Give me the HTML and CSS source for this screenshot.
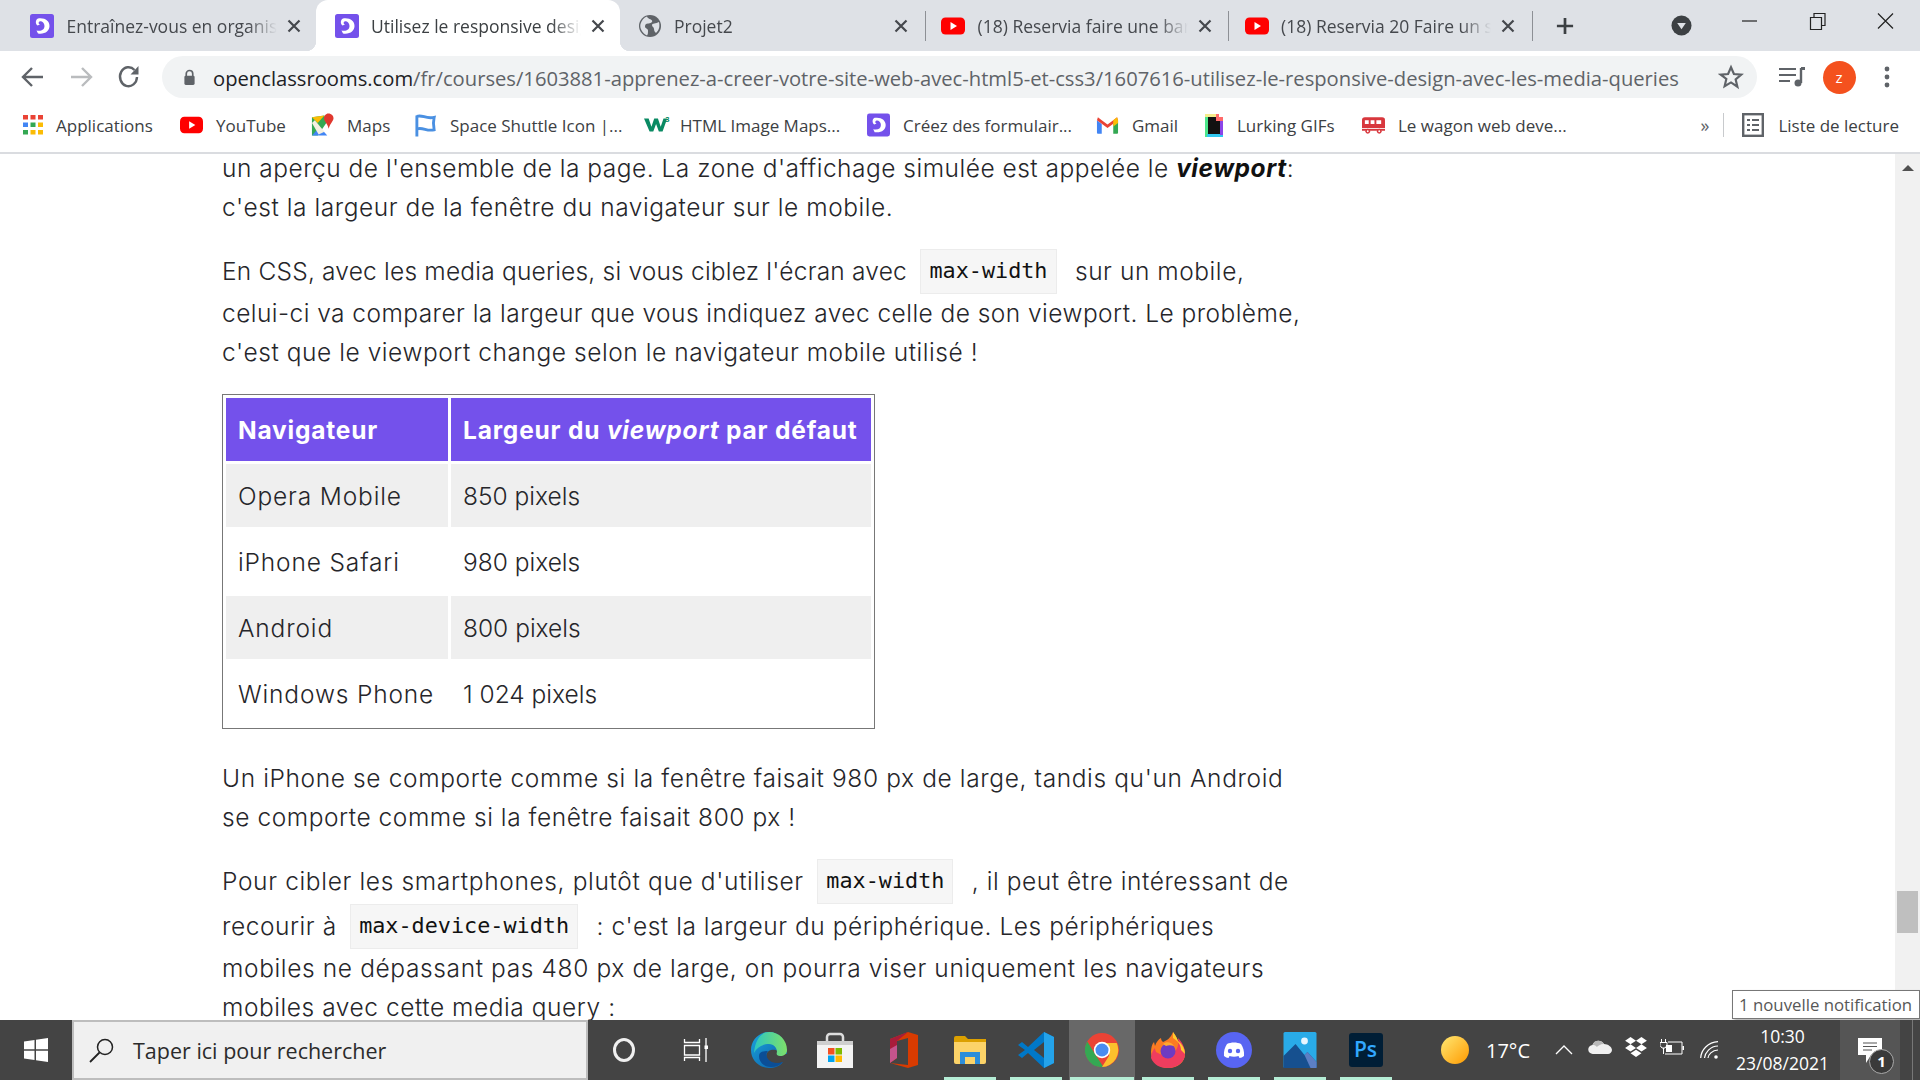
FILE: index.html
```html
<!DOCTYPE html>
<html lang="fr">
<head>
<meta charset="utf-8">
<title>Utilisez le responsive design</title>
<link rel="stylesheet" href="styles.css">
</head>
<body>
<svg class="defs" width="0" height="0">
  <symbol id="oc" viewBox="0 0 24 24"><rect width="24" height="24" rx="2.5" fill="#7451eb"/><path d="M8 4.500C15 3.500 19.500 7 19.500 12S15 20.500 8 19.500L6.500 16.500C11 17.500 14.500 16 14.500 12S11 6.500 9.500 7.500C8 8.500 8.500 10 10 10.500L7.500 11.500C5 9.500 5.500 5.500 8 4.500Z" fill="#fff"/></symbol>
  <symbol id="yt" viewBox="0 0 24 24"><rect y="3.500" width="24" height="17" rx="4.500" fill="#f00"/><path d="M9.500 8v8l6.500-4z" fill="#fff"/></symbol>
  <symbol id="x" viewBox="0 0 14 14"><path d="M1.500 1.500l11 11M12.500 1.500l-11 11" stroke="#45484d" stroke-width="2.200" fill="none"/></symbol>
</svg>

<header class="tabstrip">
  <div class="tab"><svg class="fav"><use href="#oc"/></svg><span class="tab-title">Entraînez-vous en organisant</span><svg class="tab-x"><use href="#x"/></svg></div>
  <div class="tab tab-active"><svg class="fav"><use href="#oc"/></svg><span class="tab-title">Utilisez le responsive design</span><svg class="tab-x"><use href="#x"/></svg></div>
  <div class="tab tab-sep"><svg class="fav" viewBox="0 0 24 24"><circle cx="12" cy="12" r="11" fill="#5f6368"/><path d="M9 2.500c1 3 4 2 5 4s-2 3-4 3-3 1-3 3 3 2 3 4 0 4-1 5C4 19 1.500 14 2.500 10 3.500 6.500 6 3.500 9 2.500ZM21 8c1 5 0 8-3 11-1-1-2-2-2-4s-2-2-2-4 4-1 7-3Z" fill="#dee1e6"/></svg><span class="tab-title">Projet2</span><svg class="tab-x"><use href="#x"/></svg></div>
  <div class="tab tab-sep"><svg class="fav"><use href="#yt"/></svg><span class="tab-title">(18) Reservia faire une banière</span><svg class="tab-x"><use href="#x"/></svg></div>
  <div class="tab tab-sep"><svg class="fav"><use href="#yt"/></svg><span class="tab-title">(18) Reservia 20 Faire un site</span><svg class="tab-x"><use href="#x"/></svg></div>
  <svg class="newtab" viewBox="0 0 20 20"><path d="M10 1v18M1 10h18" stroke="#3c4043" stroke-width="3"/></svg>
  <svg class="tabsearch" viewBox="0 0 22 22"><circle cx="11" cy="11" r="10.500" fill="#3c4043"/><path d="M6.500 8.500h9L11 15z" fill="#dee1e6"/></svg>
  <div class="winbtns">
    <svg class="winbtn" viewBox="0 0 68 42"><path d="M27 21h15" stroke="#222" stroke-width="1.200"/></svg>
    <svg class="winbtn" viewBox="0 0 68 42"><path d="M27.500 17.500h11v12h-11zM31 17v-3.500h11v12h-3.500" stroke="#222" stroke-width="1.200" fill="none"/></svg>
    <svg class="winbtn" viewBox="0 0 68 42"><path d="M27 13.500l15 15M42 13.500l-15 15" stroke="#222" stroke-width="1.200"/></svg>
  </div>
</header>

<nav class="toolbar">
  <svg class="tool" viewBox="0 0 48 42"><path d="M34 21H15M23 12l-9 9 9 9" stroke="#5f6368" stroke-width="2.400" fill="none"/></svg>
  <svg class="tool" viewBox="0 0 48 42"><path d="M14 21h19M25 12l9 9-9 9" stroke="#babcbe" stroke-width="2.400" fill="none"/></svg>
  <svg class="tool" viewBox="0 0 48 42"><path d="M32 21a8.500 9.500 0 1 1-2.500-7" stroke="#5f6368" stroke-width="2.400" fill="none"/><path d="M33.500 10v8.500h-8z" fill="#5f6368"/></svg>
  <div class="omnibox">
    <svg class="lock" viewBox="0 0 14 18"><path d="M3.500 8V5a3.500 3.500 0 0 1 7 0v3" stroke="#5f6368" stroke-width="1.800" fill="none"/><rect x="1.500" y="7" width="11" height="10" rx="1.500" fill="#5f6368"/></svg>
    <span class="url"><span class="host">openclassrooms.com</span>/fr/courses/1603881-apprenez-a-creer-votre-site-web-avec-html5-et-css3/1607616-utilisez-le-responsive-design-avec-les-media-queries</span>
    <svg class="star" viewBox="0 0 24 24"><path d="M12 3l2.700 6.200 6.800.6-5.200 4.500 1.600 6.700L12 17l-5.900 3.500 1.600-6.700L2.500 9.800l6.800-.6z" stroke="#5f6368" stroke-width="2" fill="none"/></svg>
  </div>
  <svg class="tool" viewBox="0 0 48 42"><path d="M12 13h17M12 19h17M12 25h11" stroke="#5f6368" stroke-width="2.200"/><path d="M34 12v15" stroke="#5f6368" stroke-width="2.400"/><path d="M34 11h4v3h-4z" fill="#5f6368"/><circle cx="31" cy="27" r="3.500" fill="#5f6368"/></svg>
  <div class="avatar-wrap"><div class="avatar">z</div></div>
  <svg class="tool" viewBox="0 0 48 42"><circle cx="24" cy="13" r="2.400" fill="#5f6368"/><circle cx="24" cy="21" r="2.400" fill="#5f6368"/><circle cx="24" cy="29" r="2.400" fill="#5f6368"/></svg>
</nav>

<nav class="bookmarks">
  <div class="bm"><svg class="bm-ic" viewBox="0 0 20 20"><g fill="#ea4335"><rect width="5" height="4.500"/><rect x="7.500" width="5" height="4.500"/><rect x="15" width="5" height="4.500"/></g><rect y="7.500" width="5" height="4.500" fill="#4285f4"/><rect x="7.500" y="7.500" width="5" height="4.500" fill="#34a853"/><rect x="15" y="7.500" width="5" height="4.500" fill="#fbbc05"/><g fill="#34a853"><rect y="15" width="5" height="4.500"/></g><rect x="7.500" y="15" width="5" height="4.500" fill="#fbbc05"/><rect x="15" y="15" width="5" height="4.500" fill="#fbbc05"/></svg><span>Applications</span></div>
  <div class="bm"><svg class="bm-ic bm-wide"><use href="#yt"/></svg><span>YouTube</span></div>
  <div class="bm"><svg class="bm-ic bm-wide" viewBox="0 0 24 24"><path d="M1 4l13-2 2 8-9 13H1z" fill="#34a853"/><path d="M1 4l6 6 7-8z" fill="#fbbc05"/><path d="M1 23l8-9 8 9z" fill="#4285f4"/><path d="M1 10l3-3 10 12-6 3z" fill="#f4f0e0"/><path d="M18 0c3.500 0 5.500 2.500 5.500 5 0 3-3.500 5-5 11-1.500-6-5-8-5-11 0-2.500 2-5 4.500-5z" fill="#e0382e"/></svg><span>Maps</span></div>
  <div class="bm"><svg class="bm-ic bm-wide" viewBox="0 0 24 24"><path d="M3 24V2M3 3c6-2 9 3 18 1-1 4-1 8 0 13-8 2-11-3-18-1" stroke="#4a90e2" stroke-width="3" fill="none"/></svg><span>Space Shuttle Icon |...</span></div>
  <div class="bm"><svg class="bm-ic bm-w3" viewBox="0 0 28 20"><path d="M0 3h5l3 9 3-9h4l3 9 3-9h4l-5 14h-4l-3-8-3 8H6z" fill="#0a8a63"/><text x="23" y="7" class="w3-sup">3</text></svg><span>HTML Image Maps...</span></div>
  <div class="bm"><svg class="bm-ic bm-wide"><use href="#oc"/></svg><span>Créez des formulair...</span></div>
  <div class="bm"><svg class="bm-ic bm-wide" viewBox="0 0 24 20"><path d="M1 5v13a1 1 0 0 0 1 1h4V9z" fill="#4285f4"/><path d="M23 5v13a1 1 0 0 1-1 1h-4V9z" fill="#34a853"/><path d="M1 5l11 8 11-8-1-3-4 3-6 4.500L6 5 2 2z" fill="#ea4335"/><path d="M18 5l4-3 1 3v3l-5 3.500z" fill="#fbbc05"/></svg><span>Gmail</span></div>
  <div class="bm"><svg class="bm-ic bm-lurk" viewBox="0 0 20 24"><rect x="1" y="1" width="11" height="3" fill="#f5ec8c"/><rect x="1" y="4" width="3" height="20" fill="#4ce68a"/><rect x="3" y="21" width="16" height="3" fill="#30c8f0"/><rect x="4" y="4" width="12" height="17" fill="#111"/><rect x="16" y="8" width="3" height="14" fill="#8b45e8"/><path d="M12 1h3v3h4v4h-7z" fill="#ff6a6a"/></svg><span>Lurking GIFs</span></div>
  <div class="bm"><svg class="bm-ic bm-wide" viewBox="0 0 24 18"><path d="M3 1h18a3 3 0 0 1 3 3v8H0V4a3 3 0 0 1 3-3z" fill="#d8373d"/><path d="M0 13h24v2H0z" fill="#d8373d"/><path d="M3 4h4v4H3zM9 4h4v4H9zM15 4h5v4h-5z" fill="#fff"/><circle cx="6" cy="15.500" r="2.500" fill="#d8373d"/><circle cx="18" cy="15.500" r="2.500" fill="#d8373d"/><circle cx="6" cy="15.500" r="1" fill="#fff"/><circle cx="18" cy="15.500" r="1" fill="#fff"/></svg><span>Le wagon web deve...</span></div>
  <div class="bm-end"><span class="chev">»</span><i class="bm-sep"></i><svg class="bm-ic bm-list" viewBox="0 0 22 24"><rect x="1.200" y="1.200" width="19.600" height="21.600" fill="none" stroke="#5f6368" stroke-width="2.400"/><path d="M5 7h3M10 7h7M5 12h3M10 12h7M5 17h3M10 17h7" stroke="#5f6368" stroke-width="2"/></svg><span>Liste de lecture</span></div>
</nav>

<main class="page">
  <article class="article">
    <p><span class="near">un aperçu de l'ensemble de la page. La zone d'affichage simulée est appelée le</span> <strong><em>viewport</em></strong>:<br>c'est la largeur de la fenêtre du navigateur sur le mobile.</p>
    <p><span class="tight">En CSS, avec les media queries, si vous ciblez l'écran avec</span> <code>max-width</code> sur un mobile,<br><span class="snug">celui-ci va comparer la largeur que vous indiquez avec celle de son viewport. Le problème,</span><br>c'est que le viewport change selon le navigateur mobile utilisé !</p>
    <table class="table">
      <thead><tr><th>Navigateur</th><th>Largeur du <em>viewport</em> par défaut</th></tr></thead>
      <tbody>
        <tr><td>Opera Mobile</td><td>850 pixels</td></tr>
        <tr><td>iPhone Safari</td><td>980 pixels</td></tr>
        <tr><td>Android</td><td>800 pixels</td></tr>
        <tr><td>Windows Phone</td><td>1 024 pixels</td></tr>
      </tbody>
    </table>
    <p><span class="wide">Un iPhone se comporte comme si la fenêtre faisait 980 px de large, tandis qu'un Android</span><br>se comporte comme si la fenêtre faisait 800 px !</p>
    <p><span class="loose">Pour cibler les smartphones, plutôt que d'utiliser</span> <code>max-width</code> , il peut être intéressant de<br>recourir à <code>max-device-width</code> : c'est la largeur du périphérique. Les périphériques<br><span class="wide">mobiles ne dépassant pas 480 px de large, on pourra viser uniquement les navigateurs</span><br>mobiles avec cette media query :</p>
  </article>
  <aside class="scrollbar"><i class="sb-arrow"></i><i class="sb-thumb"></i></aside>
  <div class="tooltip">1 nouvelle notification</div>
</main>

<footer class="taskbar">
  <div class="start"><svg class="winlogo" viewBox="0 0 24 24"><path d="M0 3.500l10.500-1.600V11.300H0zM12 1.700L24 0v11.300H12zM0 12.700h10.500v9.400L0 20.500zM12 12.700h12V24l-12-1.700z" fill="#fff"/></svg></div>
  <div class="search"><svg class="lens" viewBox="0 0 25 25"><circle cx="16" cy="9" r="7.500" stroke="#222" stroke-width="1.500" fill="none"/><path d="M10.500 14.500L1 24" stroke="#222" stroke-width="1.800"/></svg><span>Taper ici pour rechercher</span></div>
  <div class="cortana"><i class="ring"></i></div>
  <div class="taskview"><svg viewBox="0 0 25 24" class="tv"><path d="M1.500 7.500h15V17h-15zM1.500 1v3.500h15V1M1.500 23v-3.500h15V23M23 0v24" stroke="#fff" stroke-width="1.300" fill="none"/><rect x="21.500" y="7.500" width="3.500" height="3.500" fill="#fff"/></svg></div>
  <div class="apps">
    <div class="app"><svg class="app-ic" viewBox="0 0 36 36"><defs><linearGradient id="eg" x1="0" y1="0" x2="1" y2="1"><stop offset="0" stop-color="#1ba4dc"/><stop offset="1" stop-color="#0a5ca8"/></linearGradient><linearGradient id="eg2" x1="0" y1="0" x2="1" y2="0"><stop offset="0" stop-color="#2cc7c0"/><stop offset="1" stop-color="#7ee06a"/></linearGradient></defs><path d="M18 0C8 0 0 8 0 18c0 10 8 18 18 18 6 0 11-2 14-6-6 3-13 2-16-3-2-4 0-8 4-9 6-1 9 2 10 4h6C36 8 28 0 18 0Z" fill="url(#eg)"/><path d="M18 0c10 0 18 8 18 18 0 4-3 6-7 6-3 0-4-2-3-4 0-4-3-8-8-8-6 0-12 3-15 9C4 8 10 0 18 0Z" fill="url(#eg2)"/><path d="M8 24c0 7 6 11 12 11 5 0 9-2 12-5-6 2-12 1-15-3-2-3-2-6 0-8-5 0-9 1-9 5Z" fill="#0b4e96"/></svg></div>
    <div class="app"><svg class="app-ic" viewBox="0 0 36 36"><path d="M10 10V5a3 3 0 0 1 3-3h10a3 3 0 0 1 3 3v5" stroke="#ddd" stroke-width="2.500" fill="none"/><path d="M0 9h36v27H0z" fill="#f4f4f4"/><path d="M0 9h36v4H0z" fill="#cfcfcf"/><path d="M11 16h6.500v6.500H11z" fill="#f25022"/><path d="M18.500 16H25v6.500h-6.500z" fill="#7fba00"/><path d="M11 23.500h6.500V30H11z" fill="#00a4ef"/><path d="M18.500 23.500H25V30h-6.500z" fill="#ffb900"/></svg></div>
    <div class="app app-shift"><svg class="app-ic app-off" viewBox="0 0 28 36"><path d="M18 0l10 3v30l-10 3-18-5 18 2V6L7 9v17l-7 5V7z" fill="#d83b01"/><path d="M18 0L7 9v8L0 31V7z" fill="#a81c3a"/><path d="M0 17l7-4v13l-7 5z" fill="#c4548c"/></svg></div>
    <div class="app app-on"><svg class="app-ic app-folder" viewBox="0 0 32 32"><path d="M0 4a2 2 0 0 1 2-2h9l3 3h18v5H0z" fill="#dca000"/><path d="M0 8h32v20a2 2 0 0 1-2 2H2a2 2 0 0 1-2-2z" fill="#fcd368"/><path d="M6 30V18h20v12h-5v-7H11v7z" fill="#2d8ed9"/></svg></div>
    <div class="app app-on"><svg class="app-ic" viewBox="0 0 36 36"><path d="M26 0l10 5v26l-10 5-16-15-6 5-4-3 7-5-7-5 4-3 6 5z" fill="#0078c8"/><path d="M26 0l10 5v26l-10 5z" fill="#24a3ea"/><path d="M26 10v16l-10-8z" fill="#444"/></svg></div>
    <div class="app app-on app-active"><svg class="app-ic app-chrome" viewBox="0 0 24 24"><circle cx="12" cy="12" r="12" fill="#ea4335"/><path d="M1.600 6 7.500 15.500 13 24A12 12 0 0 1 1.600 6Z" fill="#34a853"/><path d="M12 7h10.400A12 12 0 0 1 12 24l5-8-.5-7z" fill="#fbc02d"/><circle cx="12" cy="12" r="5.800" fill="#fff"/><circle cx="12" cy="12" r="4.600" fill="#4a8cf0"/></svg></div>
    <div class="app app-on"><svg class="app-ic" viewBox="0 0 34 36"><path d="M17 36C7 36 0 29 0 20c0-4 1-8 3-10l1 4c1-4 4-7 6-8 0 2 1 3 2 4 3-1 8-4 10-10 3 4 4 6 5 9 3 2 7 6 7 13 0 8-7 14-17 14Z" fill="#fb7b22"/><path d="M17 36c10 0 17-7 17-14 0-7-3-12-7-16 1 6 0 12-6 16-4 2-10 2-14-1-2 0-3-3-3-5-2 2-4 6-4 10 3 7 9 10 17 10Z" fill="#ef3d5e"/><path d="M22 0c3 4 4 6 5 9 3 2 7 7 7 13l-4-4c0-5-3-9-8-12z" fill="#ffcb2e"/><circle cx="17" cy="19" r="7.500" fill="#6e3bc2"/><path d="M12 12c3-3 9-2 11 2-3-1-6-1-8 0z" fill="#ffa92e"/></svg></div>
    <div class="app app-on"><svg class="app-ic" viewBox="0 0 36 36"><circle cx="18" cy="18" r="18" fill="#5865f2"/><path d="M11 12c4-2 10-2 14 0 2 3 3.500 7 3 12-1.500 1-3 2-4.500 2l-1-2c-3 1-6 1-9 0l-1 2c-1.500 0-3-1-4.500-2-.5-5 1-9 3-12Z" fill="#fff"/><circle cx="14" cy="19" r="2.200" fill="#5865f2"/><circle cx="22" cy="19" r="2.200" fill="#5865f2"/></svg></div>
    <div class="app app-on"><svg class="app-ic" viewBox="0 0 33 36"><rect width="33" height="36" rx="1.500" fill="#29abe8"/><path d="M0 36V24L12 12l9 11 3-3 9 10v6z" fill="#16508f"/><path d="M21 23l3-3 9 10v6h-6z" fill="#5c7fc4"/><circle cx="21" cy="9" r="3.400" fill="#e8f6ff"/></svg></div>
    <div class="app app-on"><div class="ps">Ps</div></div>
  </div>
  <div class="sun"></div>
  <div class="temp">17°C</div>
  <svg class="tray tray-chev" viewBox="0 0 18 12"><path d="M1 10l8-8 8 8" stroke="#fff" stroke-width="1.300" fill="none"/></svg>
  <svg class="tray tray-od" viewBox="0 0 24 16"><path d="M5 15a4.500 4.500 0 0 1-.5-9C6 1 13 0 16 5c4 0 8 3 8 6 0 2-2 4-4 4z" fill="#f0f0f0"/><path d="M4.500 6C6 1 13 0 16 5c-4 0-6 2-7 3-2-2-3-2-4.500-2z" fill="#b8b8b8"/></svg>
  <svg class="tray tray-db" viewBox="0 0 24 22"><path d="M6 0l6 4-6 4-6-4zM18 0l6 4-6 4-6-4zM6 8l6 4-6 4-6-4zM18 8l6 4-6 4-6-4zM12 14l6 4-6 4-6-4z" fill="#fff"/></svg>
  <svg class="tray tray-bat" viewBox="0 0 24 16"><path d="M8 3h14v12H5" stroke="#fff" stroke-width="1" fill="none"/><rect x="22.500" y="7" width="1.500" height="4" fill="#fff"/><rect x="6" y="6" width="6" height="7" fill="#fff"/><path d="M1.500 0v3M5.500 0v3M0 3.500h7v3L5 9H2L0 6.500zM3.500 9v6" stroke="#fff" stroke-width="1" fill="none"/></svg>
  <svg class="tray tray-wifi" viewBox="0 0 18 18"><g stroke="#fff" fill="none" stroke-width="1.200"><path d="M.7 17C1 9 8 1 18 .7"/><path d="M4.500 17C5 12 10 5 18 5"/><path d="M8 17c.2-3 4-8 10-8"/></g><circle cx="16" cy="16" r="1.800" fill="#fff"/></svg>
  <div class="clock"><div>10:30</div><div>23/08/2021</div></div>
  <div class="action"><svg class="bubble" viewBox="0 0 24 26"><path d="M0 0h24v17H13l-5 8v-8H0z" fill="#fff"/><path d="M5 5h14M5 8.500h14M5 12h9" stroke="#555" stroke-width="1"/></svg><span class="badge">1</span></div>
  <i class="desktop"></i>
</footer>
</body>
</html>
```
FILE: styles.css
```css
* { box-sizing: border-box; }
html, body { margin: 0; height: 100%; }
body { width: 1920px; height: 1080px; overflow: hidden; display: flex; flex-direction: column; background: #fff; font-family: "Open Sans", "Noto Sans", sans-serif; }
.defs { position: absolute; }

/* tab strip */
.tabstrip { flex: none; height: 51px; background: #dee1e6; display: flex; align-items: center; padding-left: 12px; }
.tab { position: relative; flex: none; width: 303.5px; height: 51px; display: flex; align-items: center; padding: 0 15px 0 18px; color: #45484d; font-size: 17.5px; }
.tab-active { background: #fff; border-radius: 12px 12px 0 0; color: #3c4043; width: 304px; padding: 0 15px 0 19px; }
.tab-active::before, .tab-active::after { content: ""; position: absolute; bottom: 0; width: 10px; height: 10px; }
.tab-active::before { left: -10px; background: radial-gradient(circle at 0 0, transparent 10px, #fff 10.500px); }
.tab-active::after { right: -10px; background: radial-gradient(circle at 100% 0, transparent 10px, #fff 10.500px); }
.tab-sep::after { content: ""; position: absolute; right: -2.500px; top: 11px; height: 30px; width: 1px; background: #8d9095; }
.fav { flex: none; width: 24px; height: 24px; }
.tab-title { flex: 1; min-width: 0; margin: 0 10px 0 12.500px; white-space: nowrap; overflow: hidden; -webkit-mask-image: linear-gradient(to right, #000 86%, transparent 100%); mask-image: linear-gradient(to right, #000 86%, transparent 100%); }
.tab-x { flex: none; width: 14px; height: 14px; }
.newtab { flex: none; width: 18px; height: 18px; margin-left: 25.500px; }
.tabsearch { flex: none; width: 21px; height: 21px; margin-left: 97px; }
.winbtns { display: flex; margin-left: 23px; align-self: flex-start; }
.winbtn { width: 68px; height: 42px; flex: none; }

/* toolbar */
.toolbar { flex: none; height: 52px; display: flex; align-items: center; padding-left: 9px; }
.tool { flex: none; width: 48px; height: 42px; }
.omnibox { flex: none; width: 1595px; height: 42px; margin: 0 10px 0 9px; border-radius: 21px; background: #f1f3f4; display: flex; align-items: center; padding-left: 21px; }
.lock { flex: none; width: 13px; height: 17px; }
.url { margin: 2px 0 0 17px; font-size: 20.200px; color: #5f6368; white-space: nowrap; }
.host { color: #202124; }
.star { flex: none; width: 26px; height: 26px; margin-left: auto; margin-right: 13px; }
.avatar-wrap { flex: none; width: 48px; display: flex; justify-content: center; }
.avatar { width: 33px; height: 33px; border-radius: 50%; background: #f4511e; color: #fff; font-size: 15px; display: flex; align-items: center; justify-content: center; }

/* bookmarks */
.bookmarks { flex: none; height: 51px; padding-bottom: 5px; border-bottom: 2px solid #dadce0; display: grid; grid-template-columns: 157px 131px 103px 230px 223px 229px 108px 158px 150px 1fr; align-items: center; padding-left: 23px; font-size: 17px; color: #3c4043; white-space: nowrap; }
.bm { display: flex; align-items: center; gap: 13px; }
.bm-ic { flex: none; width: 20px; height: 20px; }
.bm-wide { width: 23px; height: 24px; }
.bm-w3 { width: 26px; height: 20px; margin-right: -3px; }
.w3-sup { font-size: 8px; fill: #0a8a63; font-weight: 700; }
.bm-lurk { width: 20px; height: 24px; }
.bm-end { display: flex; align-items: center; justify-self: end; margin-right: 21px; }
.chev { font-size: 18px; margin-right: 14px; color: #5f6368; }
.bm-sep { width: 1px; height: 24px; background: #c8cacd; margin-right: 18px; }
.bm-list { width: 22px; height: 24px; margin-right: 14px; }

/* page */
.page { position: relative; flex: 1; min-height: 0; display: flex; overflow: hidden; }
.article { flex: 1; min-width: 0; padding-left: 222px; margin-top: -5.500px; font-family: Inter, "Noto Sans", sans-serif; font-weight: 300; font-size: 24.500px; letter-spacing: .55px; line-height: 39px; color: #26262a; }
.article p { margin: 0 0 22px; white-space: nowrap; }
.article strong { font-weight: 700; color: #111; }
.tight { letter-spacing: .2px; }
.snug { letter-spacing: .45px; }
.near { letter-spacing: .5px; }
.loose { letter-spacing: .65px; }
.wide { letter-spacing: .62px; }
code { display: inline-block; font-family: "DejaVu Sans Mono", monospace; font-size: 21.800px; letter-spacing: 0; line-height: 28px; font-weight: 400; padding: 7px 8px 8px; margin: 0 11px 0 6px; background: #f6f6f6; border: 1px solid #ececec; color: #111; vertical-align: 2px; }
.table { border: 1px solid #777; border-spacing: 3px; margin: 0 0 30.500px; width: 653px; }
.table th { height: 63px; padding: 3px 8px 0 12px; background: #7451eb; color: #fff; font-weight: 700; text-align: left; white-space: nowrap; letter-spacing: .8px; }
.table th:first-child { width: 222px; }
.table td { height: 63px; padding: 3px 8px 0 12px; white-space: nowrap; letter-spacing: .85px; }
.table td:last-child { letter-spacing: 0; }
.table tbody tr:nth-child(odd) td { background: #efefef; }
.scrollbar { flex: none; width: 25px; background: #f1f1f1; position: relative; display: flex; flex-direction: column; align-items: center; }
.sb-arrow { margin-top: 11px; width: 0; height: 0; border: 6px solid transparent; border-top: 0; border-bottom: 6px solid #505050; }
.sb-thumb { position: absolute; top: 737px; left: 2px; width: 21px; height: 42px; background: #bfbfbf; }
.tooltip { position: absolute; right: 0; bottom: 1px; width: 188px; height: 29px; border: 1px solid #777; background: #fff; color: #575757; font-family: "Open Sans", sans-serif; font-size: 16.800px; line-height: 27px; padding-left: 6px; white-space: nowrap; box-shadow: 2px 2px 3px rgba(0,0,0,.3); }

/* taskbar */
.taskbar { flex: none; height: 60px; background: #444; display: flex; align-items: center; color: #fff; position: relative; }
.start { flex: none; width: 72px; display: flex; justify-content: center; }
.winlogo { width: 24px; height: 24px; }
.search { flex: none; width: 516px; height: 60px; background: #f0f0f0; border: 2px solid #bdbdbd; display: flex; align-items: center; padding-left: 15px; color: #2b2b2b; font-size: 21.500px; }
.lens { flex: none; width: 25px; height: 25px; margin-right: 19px; }
.cortana { flex: none; width: 72px; display: flex; justify-content: center; }
.ring { width: 22px; height: 24px; border: 3px solid #f0f0f0; border-radius: 50%; }
.taskview { flex: none; width: 64px; display: flex; justify-content: center; padding-left: 7px; }
.tv { width: 25px; height: 24px; }
.apps { flex: none; display: flex; height: 60px; margin-left: 12px; }
.app { position: relative; flex: none; width: 66px; height: 60px; display: flex; align-items: center; justify-content: center; }
.app-shift { margin-left: 2.500px; }
.app-on::after { content: ""; position: absolute; left: 7px; right: 7px; bottom: 0; height: 3px; background: #b5edd5; }
.app-active { background: #686868; }
.app-active::after { left: 1px; right: 1px; }
.app-ic { width: 36px; height: 36px; }
.app-off { width: 28px; }
.app-folder { width: 32px; }
.app-chrome { width: 34px; height: 34px; }
.ps { width: 34px; height: 34px; border-radius: 3px; background: #001e36; color: #31a8ff; font-family: "Open Sans", sans-serif; font-weight: 600; font-size: 21px; line-height: 33px; text-align: center; }
.sun { flex: none; width: 28px; height: 28px; margin-left: 42.500px; border-radius: 50%; background: linear-gradient(135deg, #ffe873, #ff9a00); }
.temp { flex: none; width: 42px; margin-left: 17px; font-size: 20px; white-space: nowrap; }
.tray { flex: none; }
.tray-chev { width: 18px; height: 12px; margin-left: 27px; }
.tray-od { width: 24px; height: 16px; margin-left: 15px; margin-top: -6px; }
.tray-db { width: 24px; height: 20px; margin-left: 12px; margin-top: -6px; }
.tray-bat { width: 24px; height: 16px; margin-left: 12px; margin-top: -6px; }
.tray-wifi { width: 18px; height: 18px; margin-left: 16px; }
.clock { flex: none; width: 103px; margin-left: 13px; text-align: center; font-size: 17.500px; line-height: 27px; white-space: nowrap; }
.action { position: relative; flex: none; width: 60px; height: 60px; margin-left: 6px; background: #555; }
.bubble { position: absolute; left: 18px; top: 18px; width: 24px; height: 26px; }
.badge { position: absolute; left: 29px; top: 29px; width: 25px; height: 25px; border-radius: 50%; border: 1px solid #aaa; background: #3a3a3a; font-size: 15px; font-weight: 700; line-height: 23px; text-align: center; }
.desktop { position: absolute; left: 1912px; top: 0; bottom: 0; width: 1px; background: #777; }
```
